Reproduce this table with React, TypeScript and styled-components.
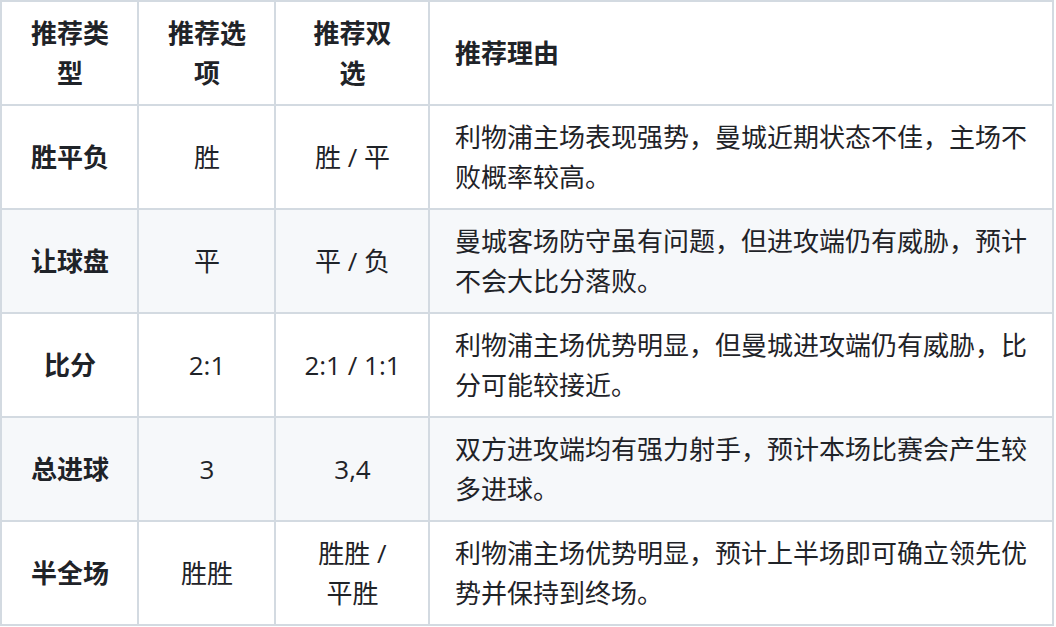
import React from 'react';
import styled, { createGlobalStyle } from 'styled-components';

const GlobalStyle = createGlobalStyle`
  html, body {
    margin: 0;
    padding: 0;
    background: #ffffff;
  }
  body {
    font-family: "Open Sans", "Noto Sans CJK SC", sans-serif;
    color: #1f2328;
  }
`;

interface IPick {
  type: string;
  single: string;
  double: string[];
  reason: string;
}

const picks: IPick[] = [
  {
    type: '胜平负',
    single: '胜',
    double: ['胜 / 平'],
    reason: '利物浦主场表现强势，曼城近期状态不佳，主场不败概率较高。',
  },
  {
    type: '让球盘',
    single: '平',
    double: ['平 / 负'],
    reason: '曼城客场防守虽有问题，但进攻端仍有威胁，预计不会大比分落败。',
  },
  {
    type: '比分',
    single: '2:1',
    double: ['2:1 / 1:1'],
    reason: '利物浦主场优势明显，但曼城进攻端仍有威胁，比分可能较接近。',
  },
  {
    type: '总进球',
    single: '3',
    double: ['3,4'],
    reason: '双方进攻端均有强力射手，预计本场比赛会产生较多进球。',
  },
  {
    type: '半全场',
    single: '胜胜',
    double: ['胜胜 /', '平胜'],
    reason: '利物浦主场优势明显，预计上半场即可确立领先优势并保持到终场。',
  },
];

const App = () => {
  return (
    <>
      <GlobalStyle />
      <Table>
        <colgroup>
          <col style={{ width: 137 }} />
          <col style={{ width: 137 }} />
          <col style={{ width: 154 }} />
          <col />
        </colgroup>
        <thead>
          <tr>
            <HeadCell $center>推荐类型</HeadCell>
            <HeadCell $center>推荐选项</HeadCell>
            <HeadCell $center>推荐双选</HeadCell>
            <HeadCell>推荐理由</HeadCell>
          </tr>
        </thead>
        <tbody>
          {picks.map((item) => (
            <Row key={item.type}>
              <TypeCell>{item.type}</TypeCell>
              <Cell $center>{item.single}</Cell>
              <Cell $center>
                {item.double.map((line, i) => (
                  <React.Fragment key={line}>
                    {i > 0 && <br />}
                    {line}
                  </React.Fragment>
                ))}
              </Cell>
              <Cell>{item.reason}</Cell>
            </Row>
          ))}
        </tbody>
      </Table>
    </>
  );
};

export default App;

const Table = styled.table`
  width: 1054px;
  table-layout: fixed;
  border-collapse: collapse;
  border-spacing: 0;
  font-size: 26px;
  line-height: 40px;
`;

const Row = styled.tr`
  background-color: #ffffff;
  &:nth-child(2n) {
    background-color: #f6f8fa;
  }
`;

const HeadCell = styled.th<{ $center?: boolean }>`
  border: 2px solid #d3dae1;
  padding: 11px 24px 11px 25px;
  font-weight: 700;
  vertical-align: middle;
  text-align: ${({ $center }) => ($center ? 'center' : 'left')};
`;

const Cell = styled.td<{ $center?: boolean }>`
  border: 2px solid #d3dae1;
  padding: 11px 24px 11px 25px;
  vertical-align: middle;
  text-align: ${({ $center }) => ($center ? 'center' : 'left')};
`;

const TypeCell = styled(Cell).attrs({ $center: true })`
  font-weight: 700;
`;
